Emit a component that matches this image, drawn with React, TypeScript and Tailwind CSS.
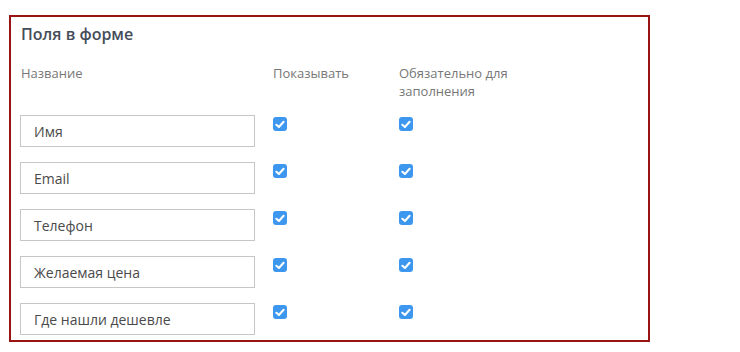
const fields = ['Имя', 'Email', 'Телефон', 'Желаемая цена', 'Где нашли дешевле'];

function Check() {
  return (
    <span className="mt-[2px] flex h-[14px] w-[14px] items-center justify-center rounded-[3px] bg-[#3d97ee]">
      <svg width="10" height="9" viewBox="0 0 10 9" fill="none">
        <path d="M1.4 4.8 L3.9 7 L8.6 1.8" stroke="white" strokeWidth="2.1" strokeLinecap="round" strokeLinejoin="round" />
      </svg>
    </span>
  );
}

export default function App() {
  return (
    <div className="h-[352px] w-[740px] bg-white pl-[9px] pt-[15px]" style={{ fontFamily: '"Open Sans", sans-serif' }}>
      <div className="h-[327px] w-[641px] border-2 border-[#9b1414] px-[9px] pt-[5px]">
        <h2 className="pl-[1px] text-[16px] font-semibold leading-[24px] text-[#444d59]">Поля в форме</h2>
        <div className="mt-[18px] flex text-[13px] leading-[18px] text-[#777]">
          <div className="w-[253px] pl-[1px]">Название</div>
          <div className="w-[126px]">Показывать</div>
          <div className="w-[130px]">Обязательно для заполнения</div>
        </div>
        <div className="mt-[15px] flex flex-col gap-[15px]">
          {fields.map((f) => (
            <div key={f} className="flex items-start">
              <div className="mr-[18px] flex h-[32px] w-[235px] items-center border border-[#c6c6c6] px-[13px] text-[14px] text-[#4a4a4a]">
                {f}
              </div>
              <div className="w-[126px]">
                <Check />
              </div>
              <Check />
            </div>
          ))}
        </div>
      </div>
    </div>
  );
}
